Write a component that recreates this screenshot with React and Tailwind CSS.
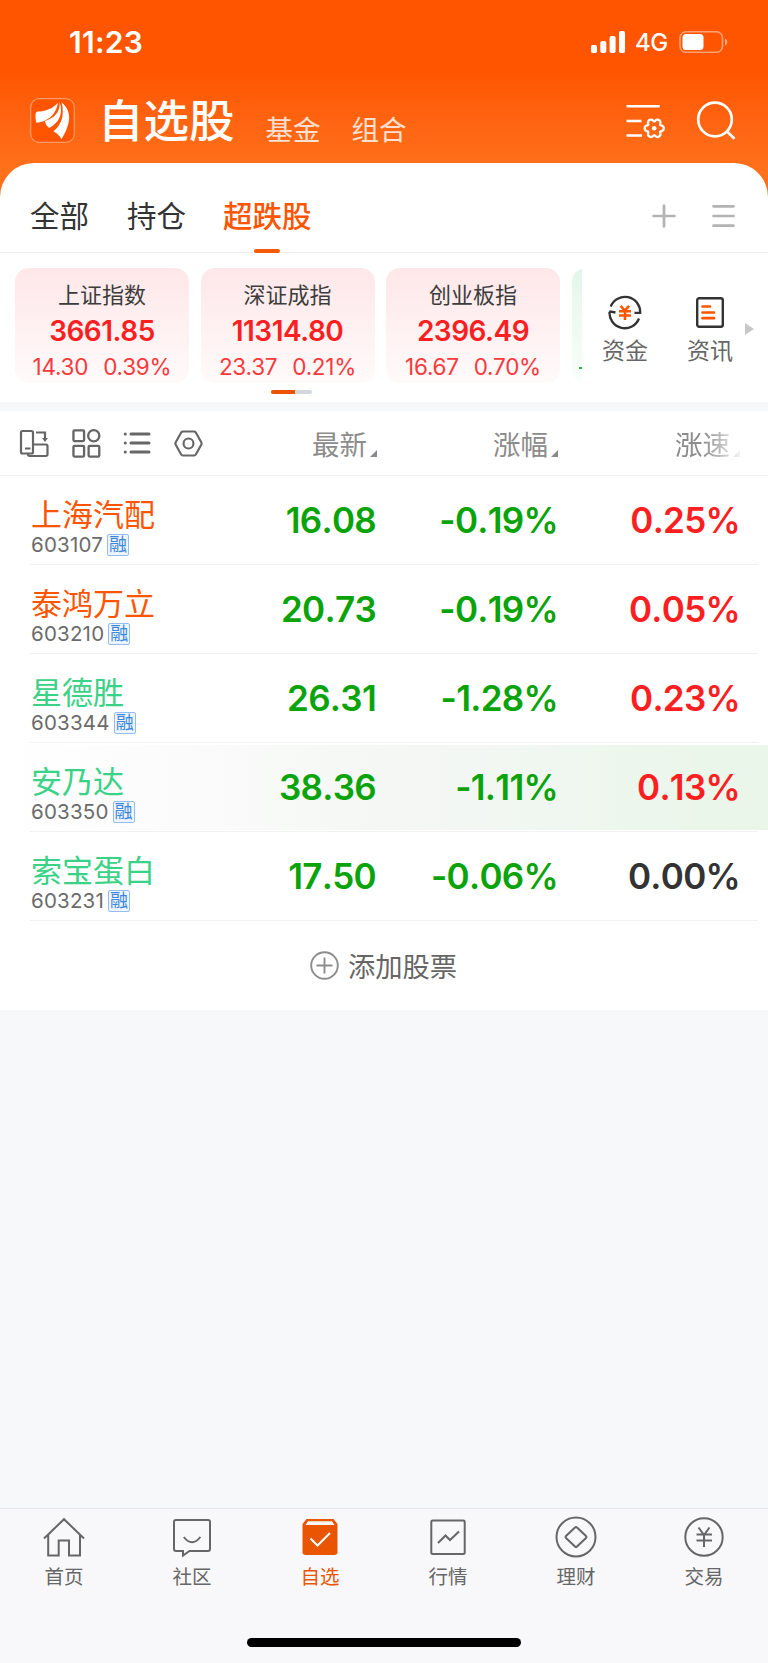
const indices = [
  { name: "上证指数", value: "3661.85", diff: "14.30", rate: "0.39%" },
  { name: "深证成指", value: "11314.80", diff: "23.37", rate: "0.21%" },
  { name: "创业板指", value: "2396.49", diff: "16.67", rate: "0.70%" },
];

const stocks = [
  { name: "上海汽配", code: "603107", price: "16.08", change: "-0.19%", speed: "0.25%", hot: true },
  { name: "泰鸿万立", code: "603210", price: "20.73", change: "-0.19%", speed: "0.05%", hot: true },
  { name: "星德胜", code: "603344", price: "26.31", change: "-1.28%", speed: "0.23%" },
  { name: "安乃达", code: "603350", price: "38.36", change: "-1.11%", speed: "0.13%", active: true },
  { name: "索宝蛋白", code: "603231", price: "17.50", change: "-0.06%", speed: "0.00%", flat: true },
];

// six-lobed gear outline, centered at 0,0
const gearPoints = Array.from({ length: 72 }, (_, i) => {
  const a = (i / 72) * Math.PI * 2;
  const r = 8.5 + 1.3 * Math.cos(6 * a) - 0.3 * Math.cos(12 * a);
  return `${(r * Math.cos(a)).toFixed(2)},${(r * Math.sin(a)).toFixed(2)}`;
}).join(" ");

const StatusBar = () => (
  <div className="flex h-[84px] items-center justify-between pl-[69px] pr-[40px]">
    <span className="text-[30px] leading-none font-semibold tracking-[0.3px]">11:23</span>
    <div className="flex items-center">
      <svg width="34" height="22" viewBox="0 0 34 22" fill="currentColor">
        <rect x="0" y="14" width="6" height="8" rx="1.8" />
        <rect x="9.3" y="10" width="6" height="12" rx="1.8" />
        <rect x="18.6" y="5" width="6" height="17" rx="1.8" />
        <rect x="28" y="0" width="6" height="22" rx="1.8" />
      </svg>
      <span className="ml-[10px] mt-[2px] w-[33px] text-[24px] leading-none font-medium tracking-[-0.4px]">4G</span>
      <svg className="ml-[11px]" width="49" height="24" viewBox="0 0 49 24" fill="none">
        <rect x="1" y="1.7" width="42.500" height="20.600" rx="6" stroke="#fff" strokeOpacity="0.45" strokeWidth="1.6" />
        <rect x="3.500" y="4" width="21" height="16" rx="3.500" fill="#fff" />
        <path d="M46 8.500c3 1.200 3 5.800 0 7z" fill="#fff" fillOpacity="0.5" />
      </svg>
    </div>
  </div>
);

const Header = () => (
  <div className="flex h-[79px] items-start pl-[30px] pr-[30px]">
    <svg className="mt-[14px]" width="45" height="45" viewBox="0 0 45 45" fill="none">
      <rect x="0.700" y="0.700" width="43.600" height="43.600" rx="8.500" fill="#ff5500" stroke="#ff9a66" strokeWidth="1.2" />
      <g fill="#fff">
        <path d="M28 4.500C23 11 15 13.300 8 13.600Q6 13.800 5.600 15.500Q5 20 6.300 24.700C16 24 26 18 28 4.500z" />
        <path d="M29.700 4.200C30 15 24 20 14.800 23Q15.500 27 19 30C29 25 33.500 16 29.700 4.200z" />
        <path d="M31.700 4.500C34.500 17 32 26 23.500 33.500Q29 36 31.300 41.200C34 37 36.500 33 38.500 25C40.500 17 38 9.500 31.700 4.500z" />
      </g>
    </svg>
    <h1 className="ml-[23px] mt-[14px] text-[45.500px] leading-[48px] font-medium">自选股</h1>
    <span className="ml-[31px] mt-[30px] text-[27.500px] leading-[32px] text-white/80">基金</span>
    <span className="ml-[31px] mt-[30px] text-[27.500px] leading-[32px] text-white/80">组合</span>
    <svg className="ml-auto mt-[18px]" width="41" height="38" viewBox="0 0 41 38" fill="none" stroke="#fff" strokeWidth="2.500">
      <path d="M.5 4.200H33.700M.5 18.900H15.500M.5 33.600H16" />
      <polygon points={gearPoints} transform="translate(28.200 26.300)" strokeWidth="2.300" strokeLinejoin="round" />
      <circle cx="28.200" cy="26.300" r="2.300" fill="#fff" stroke="none" />
    </svg>
    <svg className="ml-[29px] mt-[15px]" width="42" height="42" viewBox="0 0 42 42" fill="none" stroke="#fff" strokeWidth="2.700">
      <circle cx="19" cy="20.500" r="16.800" />
      <path d="M30.500 32l8 7.800" />
    </svg>
  </div>
);

const GroupTabs = () => (
  <div className="flex h-[90px] items-start border-b border-[#ededef] pl-[30px] pr-[33px] text-[29.500px] leading-[36px] text-[#333]">
    <span className="mt-[35px]">全部</span>
    <span className="ml-[38px] mt-[35px]">持仓</span>
    <div className="ml-[37px] flex h-[90px] flex-col items-center justify-between pt-[35px]">
      <span className="font-medium text-[#ff5500]">超跌股</span>
      <span className="h-[4px] w-[26px] rounded-full bg-[#f55a0a]" />
    </div>
    <svg className="ml-auto mt-[41px]" width="24" height="24" stroke="#b3b3b3" strokeWidth="2.700" strokeLinecap="round">
      <path d="M12 1.500V22.500M1.500 12H22.500" />
    </svg>
    <svg className="ml-[36px] mt-[41px]" width="23" height="24" stroke="#b3b3b3" strokeWidth="2.700" strokeLinecap="round">
      <path d="M1.500 2.300H21.500M1.500 12H21.500M1.500 21.700H21.500" />
    </svg>
  </div>
);

const IndexCard = ({ item }) => (
  <div className="flex h-[115px] w-[174px] shrink-0 flex-col items-center rounded-[14px] bg-linear-to-b from-[#fee7e9] to-[#fffafa]">
    <span className="mt-[14px] text-[22px] leading-[26px] text-[#3c3c3c]">{item.name}</span>
    <span className="mt-[7px] text-[28px] leading-[32px] font-semibold tracking-[-0.5px] text-[#fb1f22]">{item.value}</span>
    <span className="mt-[6px] flex gap-[15px] text-[22.500px] leading-[28px] tracking-[-0.250px] text-[#f9393c]">
      <span>{item.diff}</span>
      <span>{item.rate}</span>
    </span>
  </div>
);

const IndexStrip = () => (
  <div className="flex h-[149px] pt-[15px]">
    <div className="w-[582px] overflow-hidden pl-[15px]">
      <div className="flex gap-[11.500px]">
        {indices.map((item) => (
          <IndexCard key={item.name} item={item} />
        ))}
        <div className="h-[115px] w-[174px] shrink-0 rounded-[14px] bg-linear-to-b from-[#e3f6ec] to-[#fafefc] pl-[7px] pt-[99px]">
          <div className="h-[2px] w-[20px] bg-[#2eb135]" />
        </div>
      </div>
      <div className="ml-[256px] mt-[7px] flex h-[4px] w-[41px] overflow-hidden rounded-full bg-[#d5d7de]">
        <div className="w-[24px] bg-[#ea5504]" />
      </div>
    </div>
    <div className="flex flex-1 pl-[19px] text-[23px] leading-[28px] text-[#666]">
      <div className="flex w-[48px] flex-col items-center pt-[26px]">
        <svg width="36" height="36" viewBox="0 0 36 36" fill="none" stroke="#333" strokeWidth="2.300">
          <path d="M3.700 12.500A15.300 15.300 0 0 1 33.200 18.800H27.500M2.500 17.800A15.300 15.300 0 0 0 32 24.500M8.500 18.500L2.300 17.400" />
          <path d="M13.500 11.800l4.300 4.700 4.300-4.700M12 17.200h12M12 21.400h12M18 16.500v9.500" stroke="#ff5500" strokeWidth="2.500" />
        </svg>
        <span className="mt-[7px] whitespace-nowrap">资金</span>
      </div>
      <div className="ml-[37px] flex w-[48px] flex-col items-center pt-[26px]">
        <svg width="36" height="36" viewBox="0 0 36 36" fill="none">
          <rect x="5.200" y="4.200" width="25.600" height="28.600" rx="2" stroke="#333" strokeWidth="2.400" />
          <path d="M10.500 12.500H18M10.500 18.500H22M10.500 24.200H22" stroke="#ff5500" strokeWidth="2.700" strokeLinecap="round" />
        </svg>
        <span className="mt-[7px] whitespace-nowrap">资讯</span>
      </div>
      <svg className="ml-[11px] mt-[54px]" width="10" height="14" fill="#c8c8c8">
        <path d="M0 1L9 7L0 13z" />
      </svg>
    </div>
  </div>
);

const SortArrow = () => (
  <svg className="mb-[2px] ml-[3px] self-end" width="7" height="7" fill="#8a8a8e">
    <path d="M7 0V7H0z" />
  </svg>
);

const ColumnTitle = ({ label, className = "" }) => (
  <div className={`flex items-center justify-end ${className}`}>
    <div className="mt-[4px] flex h-[28px] items-center text-[27.500px] leading-[28px] text-[#8c8c8c]">
      {label}
      <SortArrow />
    </div>
  </div>
);

const Toolbar = () => (
  <div className="flex h-[65px] items-center border-b border-[#f0f0f2] pl-[18px]">
    <div className="mr-[2px] flex w-[185px] items-center justify-between text-[#666]">
      <svg width="31" height="30" viewBox="0 0 31 30" fill="none" stroke="currentColor" strokeWidth="2.200">
        <rect x="3" y="3" width="12" height="22.500" rx="1.500" />
        <path d="M7 20.500h5.500M18 4.500h9v8M15 16.500h13a1.500 1.500 0 0 1 1.500 1.500v8.500a1.500 1.500 0 0 1-1.500 1.500H11.500a1.500 1.500 0 0 1-1.500-1.500v-1" />
        <path d="M24 10h6L27 14z" fill="currentColor" stroke="none" />
      </svg>
      <svg width="29" height="29" viewBox="0 0 30 30" fill="none" stroke="currentColor" strokeWidth="2.400">
        <rect x="1.500" y="1.500" width="11" height="11" rx="1" />
        <circle cx="22.500" cy="7" r="5.800" />
        <rect x="1.500" y="17.500" width="11" height="11" rx="1" />
        <rect x="17.200" y="17.500" width="11" height="11" rx="1" />
      </svg>
      <svg width="28" height="30" viewBox="0 0 28 30" fill="none" stroke="currentColor" strokeWidth="3" strokeLinecap="round">
        <path d="M8 6H26M8 15H26M8 24H26M2.200 6h.1M2.200 15h.1M2.200 24h.1" />
      </svg>
      <svg width="29" height="29" viewBox="0 0 31 30" fill="none" stroke="currentColor" strokeWidth="2.300" strokeLinejoin="round">
        <path d="M9.500 2.200H21.500q1.200 0 1.800 1L29.300 14q.4 1 0 2l-6 10.800q-.6 1-1.800 1H9.500q-1.200 0-1.800-1L1.700 16q-.4-1 0-2l6-10.800q.6-1 1.800-1z" />
        <circle cx="15.500" cy="15" r="5.300" />
      </svg>
    </div>
    <ColumnTitle label="最新" className="w-[172px]" />
    <ColumnTitle label="涨幅" className="w-[181px]" />
    <ColumnTitle label="涨速" className="w-[182px] [mask-image:linear-gradient(to_right,#000_145px,transparent_186px)]" />
  </div>
);

const StockRow = ({ stock }) => {
  const nameColor = stock.hot ? "text-[#ff5500]" : "text-[#3ad286]";
  const speedColor = stock.flat ? "text-[#333]" : "text-[#fb1f22]";

  return (
    <div className="flex h-[89px] flex-col">
      <div className={`mt-[2px] mb-px flex h-[85px] ${stock.active ? "bg-linear-to-r from-white via-[#f5f7f5] to-[#e9f6e9]" : ""}`}>
        <div className="w-[196px] pl-[31px] pt-[20px]">
          <div className={`text-[31px] leading-[34px] ${nameColor}`}>{stock.name}</div>
          <div className="mt-[2px] flex h-[22px] items-center gap-[4px]">
            <span className="text-[20.500px] leading-[22px] tracking-[0.2px] text-[#6b6b6b]">{stock.code}</span>
            <span className="flex h-[22px] w-[22px] items-center justify-center rounded-[2px] border border-[#93bdf0] bg-[#eef5fd] text-[18px] leading-[20px] text-[#3b86dd]">
              融
            </span>
          </div>
        </div>
        <div className="flex h-[84px] flex-1 items-center text-[35px] leading-none font-semibold tracking-[-0.7px] text-[#0aa30a] [font-kerning:none]">
          <span className="w-[180px] text-right">{stock.price}</span>
          <span className="w-[182px] text-right">{stock.change}</span>
          <span className={`w-[182px] text-right ${speedColor}`}>{stock.speed}</span>
        </div>
      </div>
      <div className="ml-[30px] mr-[10px] h-px bg-[#f2f2f3]" />
    </div>
  );
};

const tabs = [
  {
    label: "首页",
    icon: <path d="M1 21.500L21 2.200L41 21.500M5.200 18V38.500H15.700V23.500H26V38.500H37V18" />,
  },
  {
    label: "社区",
    icon: <path d="M5 3H37a2 2 0 0 1 2 2V32a2 2 0 0 1-2 2H18.500L12 38.500V34H5a2 2 0 0 1-2-2V5a2 2 0 0 1 2-2zM12.800 20q8.200 10.500 16.600 0" />,
  },
  {
    label: "自选",
    active: true,
    icon: (
      <>
        <path d="M7.500 2H34.500L38.500 7V35a3 3 0 0 1-3 3H6.500a3 3 0 0 1-3-3V7z" fill="#ea5504" stroke="none" />
        <path d="M9 4.300H33L35.500 8H6.500z" fill="#fbf7f5" stroke="none" />
        <path d="M11.500 21.500L18.500 28.500L31 16" stroke="#fff" />
      </>
    ),
  },
  {
    label: "行情",
    icon: (
      <>
        <rect x="4.300" y="3.500" width="33.400" height="33.400" rx="1.500" />
        <path d="M11 26L18.500 18.500L23 23L32 14.500" />
      </>
    ),
  },
  {
    label: "理财",
    icon: (
      <>
        <circle cx="21" cy="20" r="19.500" />
        <path d="M20 10.500q1-1 2 0l9 8.500q1 1 0 2l-9 8.500q-1 1-2 0l-9-8.500q-1-1 0-2z" />
      </>
    ),
  },
  {
    label: "交易",
    icon: (
      <>
        <circle cx="21" cy="20" r="18.700" />
        <path d="M15.500 10.500L21 18L26.500 10.500M13.500 17.500H29M13.500 23.500H29M21 18V30" />
      </>
    ),
  },
];

const TabBar = () => (
  <nav className="flex h-[155px] flex-col border-t border-[#e4e5e8] bg-[#f8f8fb]">
    <div className="flex">
      {tabs.map((tab) => (
        <div key={tab.label} className={`flex w-[128px] flex-col items-center pt-[8px] ${tab.active ? "text-[#ea5504]" : "text-[#666]"}`}>
          <svg width="42" height="40" viewBox="0 0 42 40" fill="none" stroke="currentColor" strokeWidth="2" className="overflow-visible">
            {tab.icon}
          </svg>
          <span className="mt-[8px] text-[19.500px] leading-[24px]">{tab.label}</span>
        </div>
      ))}
    </div>
    <div className="mx-auto mb-[16px] mt-auto h-[9px] w-[274px] rounded-full bg-black" />
  </nav>
);

export default function App() {
  return (
    <div className="flex h-[1663px] w-[768px] flex-col overflow-hidden bg-[#f7f8fa] font-['Inter','Noto_Sans_CJK_SC',sans-serif]">
      <div className="bg-linear-to-b from-[#ff5500] from-[28%] to-[#ff701b] to-[66%] text-white">
        <StatusBar />
        <Header />
        <div className="rounded-t-[34px] bg-white">
          <GroupTabs />
        </div>
      </div>
      <div className="bg-white">
        <IndexStrip />
      </div>
      <div className="mt-[9px] h-[599px] bg-white">
        <Toolbar />
        {stocks.map((stock) => (
          <StockRow key={stock.code} stock={stock} />
        ))}
        <div className="flex h-[89px] items-center justify-center gap-[9px] pr-[1px] text-[27.300px] text-[#666]">
          <svg width="29" height="29" viewBox="0 0 29 29" fill="none" stroke="#8c8c8c" strokeWidth="1.900">
            <circle cx="14.500" cy="14.500" r="13.300" />
            <path d="M14.500 6.500V22.500M6.500 14.500H22.500" />
          </svg>
          <span className="pt-[5px]">添加股票</span>
        </div>
      </div>
      <div className="flex-1" />
      <TabBar />
    </div>
  );
}
